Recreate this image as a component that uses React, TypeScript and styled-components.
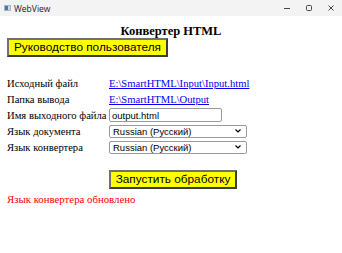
import React, { useState } from "react";
import styled, { createGlobalStyle } from "styled-components";

const GlobalStyle = createGlobalStyle`
  html, body {
    margin: 0;
    padding: 0;
    background: #ffffff;
  }
  body {
    font-family: "Liberation Serif", "Times New Roman", serif;
  }
`;

const Window = styled.div`
  width: 342px;
  height: 253px;
  display: flex;
  flex-direction: column;
  background: #ffffff;
  overflow: hidden;
`;

const TitleBar = styled.div`
  height: 16px;
  flex: 0 0 16px;
  display: flex;
  align-items: center;
  background: #f3f3f3;
  padding-left: 4px;
  font-family: "Open Sans", "Liberation Sans", sans-serif;
  font-size: 8.5px;
  color: #222;
`;

const AppIcon = styled.span`
  width: 7px;
  height: 6px;
  margin-right: 3px;
  background: linear-gradient(90deg, #3f78bd 0 3px, #cfd6de 3px);
  border: 1px solid #aab4be;
  box-sizing: border-box;
`;

const Title = styled.span`
  flex: 1;
`;

const Controls = styled.div`
  display: flex;
  height: 100%;
`;

const Ctrl = styled.div`
  width: 22px;
  display: flex;
  align-items: center;
  justify-content: center;
`;

const Page = styled.div`
  padding: 0 7px;
  display: flex;
  flex-direction: column;
`;

const Heading = styled.h1`
  margin: 8px 0 0;
  text-align: center;
  font-size: 12.5px;
  font-weight: bold;
  color: #000;
  line-height: 14px;
`;

const YellowButton = styled.button<{ $center?: boolean }>`
  align-self: ${p => (p.$center ? "center" : "flex-start")};
  background: #ffff00;
  border: 2px solid;
  border-color: #707070 #3c3c3c #3c3c3c #707070;
  padding: 0 5px;
  height: 19px;
  font-family: "Liberation Sans", Arial, sans-serif;
  font-size: 11.8px;
  color: #000;
  line-height: 15px;
  cursor: pointer;
`;

const Form = styled.div`
  display: grid;
  grid-template-columns: 102px auto;
  grid-auto-rows: 16px;
  align-items: center;
  margin-top: 18px;
  font-size: 10.6px;
`;

const Label = styled.span`
  color: #000;
  white-space: nowrap;
`;

const PathLink = styled.a`
  color: #0000ee;
  text-decoration: underline;
  justify-self: start;
`;

const TextInput = styled.input`
  width: 113px;
  height: 14px;
  box-sizing: border-box;
  border: 1px solid #9a9a9a;
  border-radius: 2px;
  padding: 0 2px;
  font-family: "Liberation Sans", Arial, sans-serif;
  font-size: 9.5px;
  color: #000;
  outline: none;
`;

const Select = styled.select`
  width: 138px;
  height: 13px;
  box-sizing: border-box;
  border: 1px solid #9a9a9a;
  border-radius: 2px;
  padding: 0 0 0 3px;
  font-family: "Liberation Sans", Arial, sans-serif;
  font-size: 9.5px;
  line-height: 11px;
  color: #000;
  background: #fff;
  appearance: none;
  background-image: url("data:image/svg+xml;utf8,<svg xmlns='http://www.w3.org/2000/svg' width='6' height='4'><path d='M0.5 0.5 L3 3 L5.5 0.5' fill='none' stroke='black' stroke-width='1.2'/></svg>");
  background-repeat: no-repeat;
  background-position: right 5px center;
  outline: none;
`;

const RunRow = styled.div`
  display: flex;
  justify-content: center;
  margin-top: 15px;
  padding-left: 4px;
`;

const Status = styled.div`
  margin-top: 3px;
  color: #ff0000;
  font-size: 10.8px;
  line-height: 14px;
`;

const languages = ["Russian (Русский)", "English (English)", "Deutsch (German)"];

export default function App() {
  const [fileName, setFileName] = useState("output.html");
  const [docLang, setDocLang] = useState(languages[0]);
  const [uiLang, setUiLang] = useState(languages[0]);

  return (
    <>
      <GlobalStyle />
      <Window>
        <TitleBar>
          <AppIcon />
          <Title>WebView</Title>
          <Controls>
            <Ctrl>
              <svg width="8" height="8" viewBox="0 0 8 8">
                <path d="M1 4.5h6" stroke="#444" strokeWidth="1" />
              </svg>
            </Ctrl>
            <Ctrl>
              <svg width="8" height="8" viewBox="0 0 8 8">
                <rect x="1.5" y="1.5" width="5" height="5" rx="1" fill="none" stroke="#444" strokeWidth="1" />
              </svg>
            </Ctrl>
            <Ctrl>
              <svg width="8" height="8" viewBox="0 0 8 8">
                <path d="M1.5 1.5l5 5M6.5 1.5l-5 5" stroke="#444" strokeWidth="1" />
              </svg>
            </Ctrl>
          </Controls>
        </TitleBar>
        <Page>
          <Heading>Конвертер HTML</Heading>
          <YellowButton>Руководство пользователя</YellowButton>
          <Form>
            <Label>Исходный файл</Label>
            <PathLink href="#">E:\SmartHTML\Input\Input.html</PathLink>
            <Label>Папка вывода</Label>
            <PathLink href="#">E:\SmartHTML\Output</PathLink>
            <Label>Имя выходного файла</Label>
            <TextInput value={fileName} onChange={e => setFileName(e.target.value)} />
            <Label>Язык документа</Label>
            <Select value={docLang} onChange={e => setDocLang(e.target.value)}>
              {languages.map(l => (
                <option key={l}>{l}</option>
              ))}
            </Select>
            <Label>Язык конвертера</Label>
            <Select value={uiLang} onChange={e => setUiLang(e.target.value)}>
              {languages.map(l => (
                <option key={l}>{l}</option>
              ))}
            </Select>
          </Form>
          <RunRow>
            <YellowButton $center>Запустить обработку</YellowButton>
          </RunRow>
          <Status>Язык конвертера обновлено</Status>
        </Page>
      </Window>
    </>
  );
}
